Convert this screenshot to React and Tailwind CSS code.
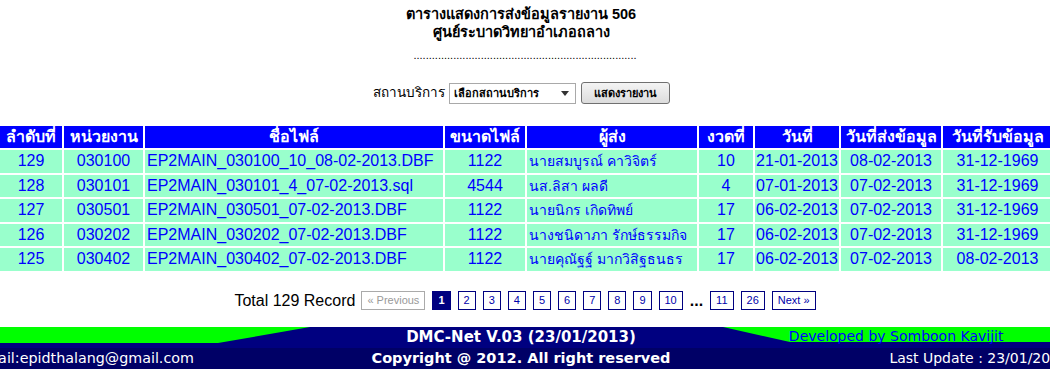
import React from 'react';

const rows = [
  ['129', '030100', 'EP2MAIN_030100_10_08-02-2013.DBF', '1122', 'นายสมบูรณ์ คาวิจิตร์', '10', '21-01-2013', '08-02-2013', '31-12-1969'],
  ['128', '030101', 'EP2MAIN_030101_4_07-02-2013.sql', '4544', 'นส.ลิสา ผลดี', '4', '07-01-2013', '07-02-2013', '31-12-1969'],
  ['127', '030501', 'EP2MAIN_030501_07-02-2013.DBF', '1122', 'นายนิกร เกิดทิพย์', '17', '06-02-2013', '07-02-2013', '31-12-1969'],
  ['126', '030202', 'EP2MAIN_030202_07-02-2013.DBF', '1122', 'นางชนิดาภา รักษ์ธรรมกิจ', '17', '06-02-2013', '07-02-2013', '31-12-1969'],
  ['125', '030402', 'EP2MAIN_030402_07-02-2013.DBF', '1122', 'นายคุณัฐฐ์ มากวิสิฐธนธร', '17', '06-02-2013', '07-02-2013', '08-02-2013'],
];

const headers = ['ลำดับที่', 'หน่วยงาน', 'ชื่อไฟล์', 'ขนาดไฟล์', 'ผู้ส่ง', 'งวดที่', 'วันที่', 'วันที่ส่งข้อมูล', 'วันที่รับข้อมูล'];

const pages = ['1', '2', '3', '4', '5', '6', '7', '8', '9', '10'];

const cellClass = (i) => {
  if (i === 2) return 'text-left pl-[2px] text-[16px]';
  // sender name is Thai, the fallback font runs wide so it is a bit smaller
  if (i === 4) return 'text-left pl-[2px] text-[14px]';
  return 'text-center text-[16px]';
};

const App = () => {
  return (
    <div className="w-[1050px] h-[378px] overflow-hidden bg-white font-['Liberation_Sans',sans-serif] text-black">
      {/* Title */}
      <div className="pt-[5px] text-center font-bold text-[14.5px] leading-[18px] pr-[8px]">
        <div>ตารางแสดงการส่งข้อมูลรายงาน 506</div>
        <div>ศูนย์ระบาดวิทยาอำเภอถลาง</div>
      </div>
      <div className="mt-[8px] text-center text-[11px] leading-[12px]">
        .........................................................................
      </div>

      {/* Filter */}
      <div className="mt-[21px] h-[22px] flex items-center justify-center pr-[8px]">
        <span className="text-[13.5px] mr-[4px]">สถานบริการ</span>
        <div className="w-[127px] h-[21px] border border-[#a9a9a9] bg-white flex items-center pl-[4px] pr-[6px]">
          <span className="flex-1 text-[11px] font-bold">เลือกสถานบริการ</span>
          <svg width="8" height="5" viewBox="0 0 8 5">
            <path d="M0 0 L8 0 L4 5 Z" fill="#333" />
          </svg>
        </div>
        <button className="ml-[5px] w-[89px] h-[22px] border border-[#707070] rounded-[3px] bg-gradient-to-b from-[#f4f4f4] to-[#dcdcdc] text-[11px] font-bold flex items-center justify-center">
          แสดงรายงาน
        </button>
      </div>

      {/* Table */}
      <table className="mt-[20px] -ml-[2px] w-[1056px] table-fixed border-separate border-spacing-[2px]">
        <colgroup>
          <col className="w-[62px]" />
          <col className="w-[79px]" />
          <col className="w-[298px]" />
          <col className="w-[80px]" />
          <col className="w-[170px]" />
          <col className="w-[54px]" />
          <col className="w-[84px]" />
          <col className="w-[100px]" />
          <col className="w-[109px]" />
        </colgroup>
        <thead>
          <tr>
            {headers.map((h) => (
              <th key={h} className="h-[22px] p-0 bg-[#0000ff] text-white font-bold text-[16px] leading-[20px] text-center whitespace-nowrap overflow-hidden">
                {h}
              </th>
            ))}
          </tr>
        </thead>
        <tbody>
          {rows.map((r) => (
            <tr key={r[0]}>
              {r.map((c, i) => (
                <td
                  key={i}
                  className={`h-[22.5px] p-0 bg-[#99ffcc] text-[#0000ff] leading-[20px] whitespace-nowrap overflow-hidden ${cellClass(i)}`}
                >
                  {c}
                </td>
              ))}
            </tr>
          ))}
        </tbody>
      </table>

      {/* Pagination */}
      <div className="mt-[18px] h-[20px] flex items-center justify-center gap-[7px]">
        <span className="text-[16px] mr-[-1px]">Total 129 Record</span>
        <span className="h-[19px] px-[5px] border border-[#aaaaaa] text-[#999999] text-[11px] leading-[17px]">« Previous</span>
        {pages.map((p) =>
          p === '1' ? (
            <span key={p} className="h-[19px] px-[5px] border border-[#000080] bg-[#000080] text-white font-bold text-[11px] leading-[17px]">
              {p}
            </span>
          ) : (
            <span key={p} className="h-[19px] px-[5px] border border-[#000080] text-[#0000aa] text-[11px] leading-[17px]">
              {p}
            </span>
          )
        )}
        <span className="text-[16px] font-bold leading-[20px]">...</span>
        <span className="h-[19px] px-[5px] border border-[#000080] text-[#0000aa] text-[11px] leading-[17px]">11</span>
        <span className="h-[19px] px-[5px] border border-[#000080] text-[#0000aa] text-[11px] leading-[17px]">26</span>
        <span className="h-[19px] px-[5px] border border-[#000080] text-[#0000aa] text-[11px] leading-[17px]">Next »</span>
      </div>

      {/* Footer, the page is wider than the window so both ends are cut */}
      <div className="mt-[16px] -ml-[32px] w-[1106px] font-['DejaVu_Sans',sans-serif]">
        <div className="relative h-[21px] bg-[#000080]">
          <svg className="absolute inset-0" width="1106" height="21" viewBox="0 0 1106 21">
            <path d="M0 0 L342 0 L250 16 L0 16 Z" fill="#00ff00" />
            <path d="M755 0 L1106 0 L1106 15 L822 15 Z" fill="#00ff00" />
          </svg>
          <div className="relative h-full grid grid-cols-[1fr_auto_1fr] items-center leading-[21px]">
            <div />
            <div className="text-white font-bold text-[15px]">DMC-Net V.03 (23/01/2013)</div>
            <div className="pl-[153px] text-[#0000ff] text-[14px] whitespace-nowrap leading-[19px] self-start">Developed by Somboon Kavijit</div>
          </div>
        </div>
        <div className="h-[21px] bg-[#000066] grid grid-cols-[1fr_auto_1fr] items-center leading-[21px] text-white">
          <div className="pl-[2px] text-[14.3px] whitespace-nowrap">E-mail:epidthalang@gmail.com</div>
          <div className="font-bold text-[14.5px] whitespace-nowrap">Copyright @ 2012. All right reserved</div>
          <div className="text-right pr-[6px] text-[14px] whitespace-nowrap">Last Update : 23/01/2013</div>
        </div>
      </div>
    </div>
  );
};

export default App;
